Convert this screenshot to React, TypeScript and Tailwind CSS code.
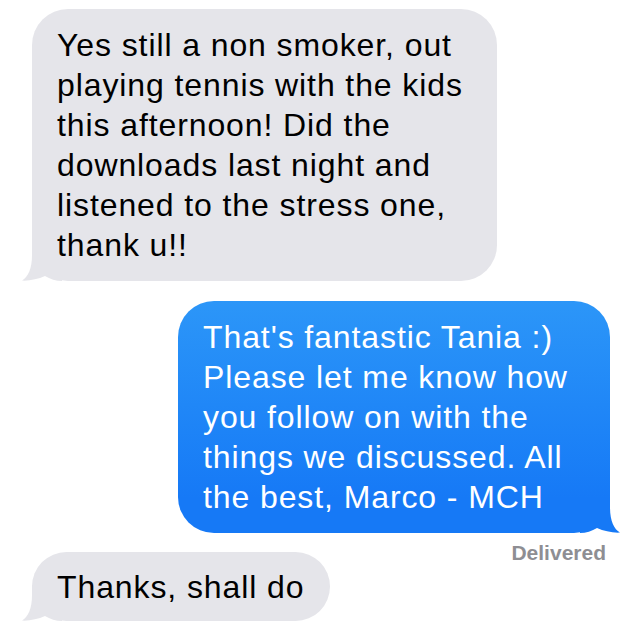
import React from "react";

function Tail({ side, color }: { side: "left" | "right"; color: string }) {
	const pos = side === "left" ? "-left-[10px]" : "-right-[10px] -scale-x-100";
	return (
		<svg className={`absolute bottom-0 ${pos} w-[40px] h-[36px]`} viewBox="0 0 40 36" fill={color}>
			<path d="M10 0 L10 10 C10 24 6 32 0 35.6 C8 36 16 34 23 31 C28 34 34 36 40 36 L40 0 Z" />
		</svg>
	);
}

type BubbleProps = {
	lines: string[];
	side: "left" | "right";
	width: string;
	pad: string;
};

function Bubble({ lines, side, width, pad }: BubbleProps) {
	const incoming = side === "left";
	return (
		<div
			className={`relative ${width} ${pad} px-[25px] rounded-[36px] text-[32px] leading-[40px] tracking-[0.9px] ${
				incoming
					? "bg-[#e5e5ea] text-black self-start ml-[32px]"
					: "bg-linear-to-b from-[#2c96f8] via-[#1679f6] via-85% to-[#1679f6] text-white self-end mr-[30px]"
			}`}
		>
			<Tail side={side} color={incoming ? "#e5e5ea" : "#1679f6"} />
			<div className="relative">
				{lines.map((l, i) => (
					<div key={i} className="whitespace-nowrap">
						{l}
					</div>
				))}
			</div>
		</div>
	);
}

export default function App() {
	return (
		<div className="w-[640px] h-[636px] bg-white overflow-hidden flex flex-col pt-[9px]" style={{ fontFamily: '"Liberation Sans", Arial, sans-serif' }}>
			<Bubble
				side="left"
				width="w-[465px]"
				pad="py-[16px]"
				lines={["Yes still a non smoker, out", "playing tennis with the kids", "this afternoon! Did the", "downloads last night and", "listened to the stress one,", "thank u!!"]}
			/>
			<div className="mt-[20px] flex flex-col">
				<Bubble
					side="right"
					width="w-[432px]"
					pad="py-[16px]"
					lines={["That's fantastic Tania :)", "Please let me know how", "you follow on with the", "things we discussed. All", "the best, Marco - MCH"]}
				/>
			</div>
			<div className="self-end mr-[34px] mt-[8px] text-[21px] leading-[24px] font-bold text-[#8e8e93]">Delivered</div>
			<div className="-mt-[13px] flex flex-col">
				<Bubble side="left" width="w-[298px]" pad="pt-[15px] pb-[14px]" lines={["Thanks, shall do"]} />
			</div>
		</div>
	);
}
